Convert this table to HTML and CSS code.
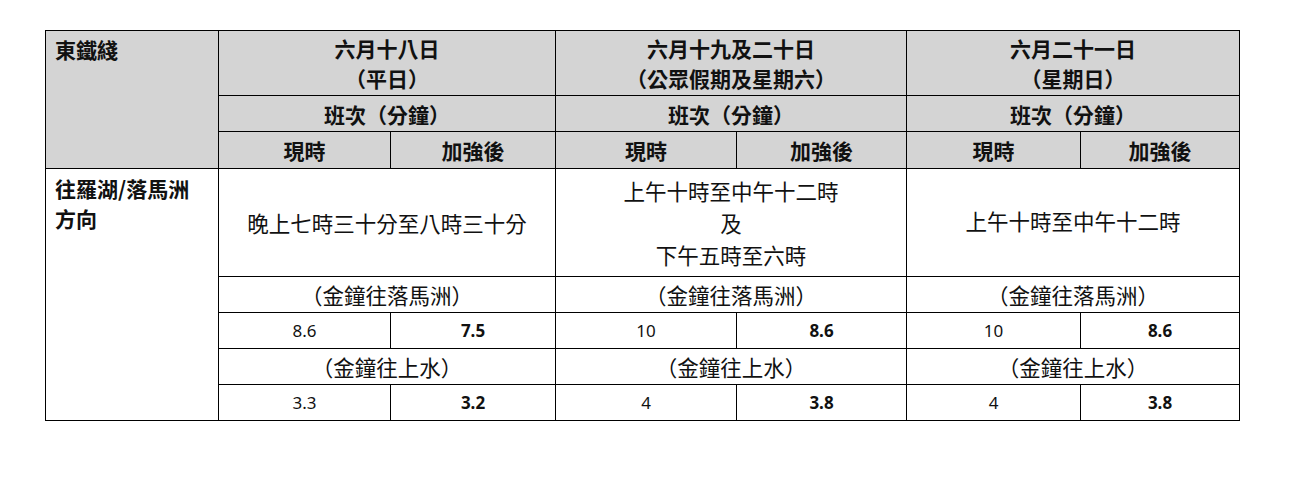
FILE: index.html
```html
<!DOCTYPE html>
<html lang="zh-Hant">
<head>
<meta charset="utf-8">
<title>東鐵綫</title>
<link rel="stylesheet" href="styles.css">
</head>
<body>
<table class="schedule">
  <colgroup>
    <col class="c0"><col class="c1"><col class="c2"><col class="c3"><col class="c4"><col class="c5"><col class="c6">
  </colgroup>
  <thead>
    <tr class="h1">
      <th class="line" rowspan="3">東鐵綫</th>
      <th colspan="2">六月十八日<br>（平日）</th>
      <th colspan="2">六月十九及二十日<br>（公眾假期及星期六）</th>
      <th colspan="2">六月二十一日<br>（星期日）</th>
    </tr>
    <tr class="h2">
      <th colspan="2">班次（分鐘）</th>
      <th colspan="2">班次（分鐘）</th>
      <th colspan="2">班次（分鐘）</th>
    </tr>
    <tr class="h3">
      <th>現時</th><th>加強後</th>
      <th>現時</th><th>加強後</th>
      <th>現時</th><th>加強後</th>
    </tr>
  </thead>
  <tbody>
    <tr class="period">
      <td class="dir" rowspan="5">往羅湖/落馬洲<br>方向</td>
      <td colspan="2">晚上七時三十分至八時三十分</td>
      <td colspan="2">上午十時至中午十二時<br>及<br>下午五時至六時</td>
      <td colspan="2"><span class="up">上午十時至中午十二時</span></td>
    </tr>
    <tr class="route">
      <td colspan="2">（金鐘往落馬洲）</td>
      <td colspan="2">（金鐘往落馬洲）</td>
      <td colspan="2">（金鐘往落馬洲）</td>
    </tr>
    <tr class="num">
      <td>8.6</td><td class="b">7.5</td>
      <td>10</td><td class="b">8.6</td>
      <td>10</td><td class="b">8.6</td>
    </tr>
    <tr class="route">
      <td colspan="2">（金鐘往上水）</td>
      <td colspan="2">（金鐘往上水）</td>
      <td colspan="2">（金鐘往上水）</td>
    </tr>
    <tr class="num">
      <td>3.3</td><td class="b">3.2</td>
      <td>4</td><td class="b">3.8</td>
      <td>4</td><td class="b">3.8</td>
    </tr>
  </tbody>
</table>
</body>
</html>
```

FILE: styles.css
```css
html, body {
  margin: 0;
  padding: 0;
  background: #ffffff;
}

body {
  padding: 30px 0 0 45px;
  font-family: "Noto Sans CJK TC", "Noto Sans", sans-serif;
  color: #111;
}

.schedule {
  border-collapse: collapse;
  table-layout: fixed;
  width: 1194px;
}

.c0 { width: 173px; }
.c1 { width: 172px; }
.c2 { width: 165px; }
.c3 { width: 181px; }
.c4 { width: 170px; }
.c5 { width: 174px; }
.c6 { width: 159px; }

.schedule th,
.schedule td {
  border: 1px solid #000;
  padding: 0;
  text-align: center;
  vertical-align: middle;
}

.schedule th {
  background: #d4d4d4;
  font-weight: 700;
  font-size: 21px;
  line-height: 30px;
}

.h1 { height: 65px; }
.h2 { height: 36px; }
.h3 { height: 37px; }

.schedule th.line {
  text-align: left;
  vertical-align: top;
  padding: 3px 0 0 9px;
}

.schedule td {
  font-size: 21.5px;
  line-height: 32px;
  font-weight: 400;
}

.schedule td.dir {
  text-align: left;
  vertical-align: top;
  font-weight: 700;
  font-size: 21px;
  line-height: 30px;
  padding: 4px 0 0 9px;
}

.period { height: 108px; }
.period .up {
  display: inline-block;
  margin-bottom: 4px;
}

.route { height: 36px; }
.num { height: 36px; }

.num td {
  font-family: "Noto Sans", "Liberation Sans", sans-serif;
  font-size: 17px;
}

.num td.b {
  font-weight: 700;
}
```
